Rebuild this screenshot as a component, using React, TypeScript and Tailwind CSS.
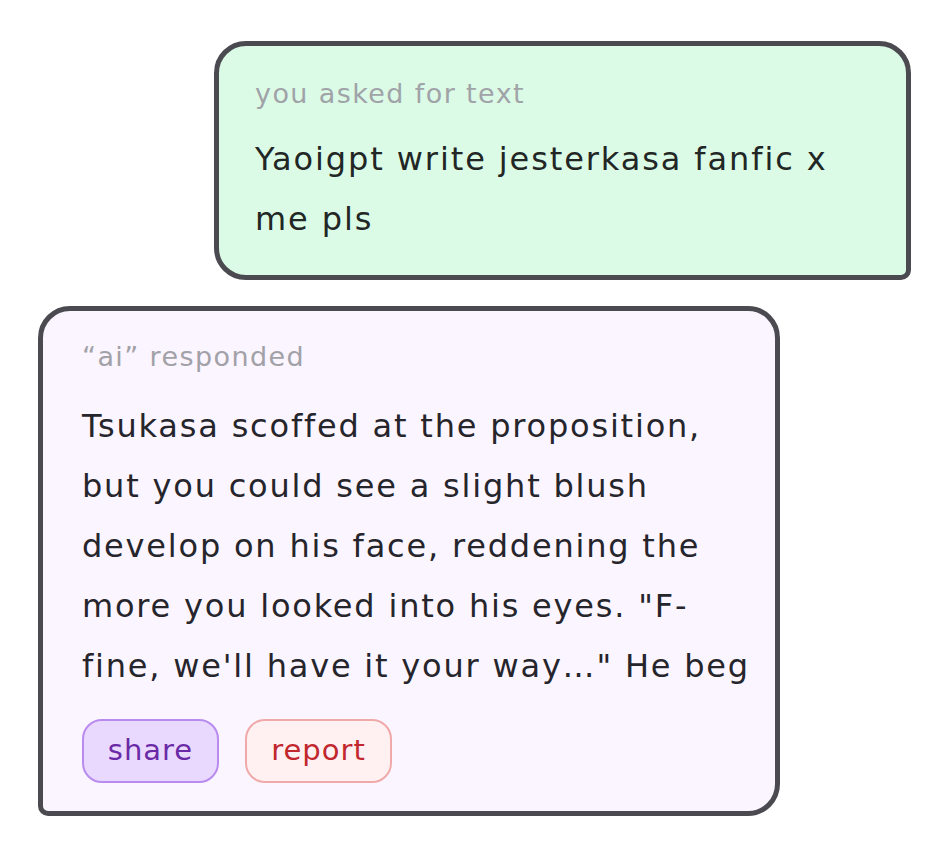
import React from "react";

const font = { fontFamily: '"DejaVu Sans", "Noto Sans", sans-serif' };

const App: React.FC = () => {
  return (
    <div className="w-[940px] h-[868px] bg-white flex flex-col pt-[41px]" style={font}>
      <div className="self-end mr-[29px] w-[697px] bg-[#dcfbe7] border-[5px] border-[#4a4a50] rounded-[32px] rounded-br-[10px] pl-[36px] pr-[30px] pt-[28px] pb-[26px]">
        <p className="text-[27px] leading-[40px] tracking-[1.4px] text-[#a0a3a8]">you asked for text</p>
        <p className="mt-[15px] text-[32px] leading-[60px] tracking-[1.9px] text-[#222624]">
          Yaoigpt write jesterkasa fanfic x me pls
        </p>
      </div>

      <div className="ml-[38px] mt-[26px] w-[742px] bg-[#faf5ff] border-[5px] border-[#4a4a50] rounded-[32px] rounded-bl-[10px] pl-[39px] pr-[10px] pt-[26px] pb-[28px]">
        <p className="text-[27px] leading-[40px] tracking-[1.4px] text-[#a2a1a8]">“ai” responded</p>
        <p className="mt-[19px] text-[32px] leading-[60px] tracking-[1.8px] text-[#26252b]">
          Tsukasa scoffed at the proposition, but you could see a slight blush develop on his face, reddening the more you looked into his eyes. "F-fine, we'll have it your way…" He beg
        </p>
        <div className="mt-[23px] flex gap-[26px]">
          <button className="h-[64px] w-[137px] rounded-[20px] border-2 border-[#b98bef] bg-[#ead9ff] text-[29px] tracking-[1px] text-[#6a2aa6]">
            share
          </button>
          <button className="h-[64px] w-[147px] rounded-[20px] border-2 border-[#f0a9a9] bg-[#fff1f1] text-[29px] tracking-[1px] text-[#c1272d]">
            report
          </button>
        </div>
      </div>
    </div>
  );
};

export default App;
